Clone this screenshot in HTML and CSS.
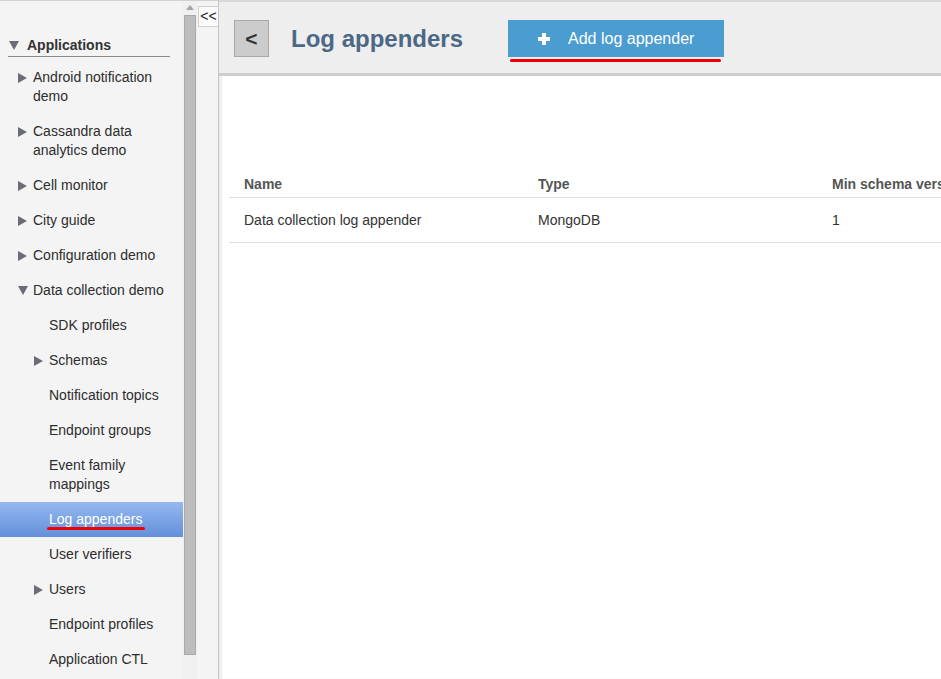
FILE: index.html
```html
<!DOCTYPE html>
<html lang="en">
<head>
<meta charset="utf-8">
<title>Log appenders</title>
<link rel="stylesheet" href="styles.css">
</head>
<body>
<div class="app">
  <aside class="sidebar">
    <div class="tree-root"><span class="tri-down root-tri"></span><span>Applications</span></div>
    <ul class="tree">
      <li class="node l1"><span class="slot"><span class="tri-right"></span></span><span class="label">Android notification demo</span></li>
      <li class="node l1"><span class="slot"><span class="tri-right"></span></span><span class="label">Cassandra data analytics demo</span></li>
      <li class="node l1"><span class="slot"><span class="tri-right"></span></span><span class="label">Cell monitor</span></li>
      <li class="node l1"><span class="slot"><span class="tri-right"></span></span><span class="label">City guide</span></li>
      <li class="node l1"><span class="slot"><span class="tri-right"></span></span><span class="label">Configuration demo</span></li>
      <li class="node l1"><span class="slot"><span class="tri-down"></span></span><span class="label">Data collection demo</span></li>
      <li class="node l2"><span class="slot"></span><span class="label">SDK profiles</span></li>
      <li class="node l2"><span class="slot"><span class="tri-right"></span></span><span class="label">Schemas</span></li>
      <li class="node l2"><span class="slot"></span><span class="label">Notification topics</span></li>
      <li class="node l2"><span class="slot"></span><span class="label">Endpoint groups</span></li>
      <li class="node l2"><span class="slot"></span><span class="label">Event family mappings</span></li>
      <li class="node l2 selected"><span class="slot"></span><span class="label"><span class="marked">Log appenders</span></span></li>
      <li class="node l2"><span class="slot"></span><span class="label">User verifiers</span></li>
      <li class="node l2"><span class="slot"><span class="tri-right"></span></span><span class="label">Users</span></li>
      <li class="node l2"><span class="slot"></span><span class="label">Endpoint profiles</span></li>
      <li class="node l2"><span class="slot"></span><span class="label">Application CTL</span></li>
    </ul>
  </aside>
  <div class="scrollbar">
    <span class="scroll-up"></span>
    <div class="thumb"></div>
  </div>
  <div class="gutter">
    <button class="collapse">&lt;&lt;</button>
  </div>
  <main class="main">
    <header class="page-header">
      <button class="back">&lt;</button>
      <h1 class="title">Log appenders</h1>
      <div class="add-wrap">
        <button class="add-btn">
          <svg class="plus" width="12" height="12" viewBox="0 0 12 12"><rect x="4" y="0" width="4" height="12" fill="#fff"/><rect x="0" y="4" width="12" height="4" fill="#fff"/></svg>
          <span>Add log appender</span>
        </button>
      </div>
    </header>
    <table class="grid">
      <thead>
        <tr><th>Name</th><th>Type</th><th>Min schema version</th></tr>
      </thead>
      <tbody>
        <tr><td>Data collection log appender</td><td>MongoDB</td><td>1</td></tr>
      </tbody>
    </table>
  </main>
</div>
</body>
</html>
```

FILE: styles.css
```css
* { box-sizing: border-box; }
html, body {
  margin: 0;
  padding: 0;
  height: 100%;
  overflow: hidden;
}
body {
  font-family: "Liberation Sans", Arial, sans-serif;
  font-size: 14px;
  color: #333;
  background: #f4f4f4;
}
.app {
  display: flex;
  height: 679px;
  border-top: 1px solid #d2d2d2;
}

/* Sidebar */
.sidebar {
  width: 183px;
  flex: none;
  background: #f4f4f4;
  overflow: hidden;
}
.tree-root {
  display: flex;
  align-items: center;
  margin: 35px 13px 3px 8px;
  padding: 0 0 1px 1px;
  border-bottom: 1px solid #8a8a8a;
  font-weight: bold;
  line-height: 19px;
  color: #333;
}
.root-tri { margin-right: 8px; }
.tree {
  list-style: none;
  margin: 0;
  padding: 0;
}
.node {
  display: flex;
  align-items: flex-start;
  padding: 8px 12px 8px 0;
  line-height: 19px;
  color: #2d2d2d;
}
.node.l1 { padding-left: 18px; }
.node.l2 { padding-left: 34px; }
.slot {
  flex: none;
  width: 15px;
  height: 19px;
  display: flex;
  align-items: center;
}
.tri-right {
  display: inline-block;
  width: 0;
  height: 0;
  border-top: 5px solid transparent;
  border-bottom: 5px solid transparent;
  border-left: 9px solid #6a6d78;
}
.tri-down {
  display: inline-block;
  width: 0;
  height: 0;
  border-left: 5px solid transparent;
  border-right: 5px solid transparent;
  border-top: 9px solid #6a6d78;
}
.node.selected {
  background: linear-gradient(#94b8f0, #6490da);
  color: #fff;
}
.marked {
  position: relative;
}
.marked::after {
  content: "";
  position: absolute;
  left: -2px;
  right: -3px;
  bottom: -3px;
  height: 3px;
  border-radius: 2px;
  background: #f00000;
}

/* Fake scrollbar */
.scrollbar {
  width: 14px;
  flex: none;
  background: #f0f0f0;
  display: flex;
  flex-direction: column;
  align-items: center;
  padding-top: 4px;
}
.scroll-up {
  width: 0;
  height: 0;
  border-left: 4px solid transparent;
  border-right: 4px solid transparent;
  border-bottom: 5px solid #a4a4a4;
}
.thumb {
  margin-top: 5px;
  width: 12px;
  height: 640px;
  background: #bdbdbd;
  border: 1px solid #a9a9a9;
}

/* Gutter */
.gutter {
  width: 21px;
  flex: none;
  background: #f4f4f4;
  padding-top: 5px;
  padding-left: 1px;
}
.collapse {
  display: block;
  width: 21px;
  height: 21px;
  padding: 0;
  border: 1px solid #cfcfcf;
  background: #fbfbfb;
  font-family: "Liberation Sans", Arial, sans-serif;
  font-size: 14px;
  line-height: 17px;
  color: #222;
  text-align: center;
}

/* Main */
.main {
  flex: 1;
  min-width: 0;
  background: #fff;
  border-left: 1px solid #c4c4c4;
  box-shadow: inset 3px 0 2px rgba(0, 0, 0, 0.07);
  overflow: hidden;
  margin-top: -1px;
}
.page-header {
  display: flex;
  align-items: center;
  height: 76px;
  padding: 2px 0 0 15px;
  background: #eeeeee;
  border-top: 2px solid #d8d8d8;
  border-bottom: 3px solid #cdcdcd;
}
.back {
  width: 35px;
  height: 37px;
  padding: 0;
  background: #cccccc;
  border: 1px solid #a8a8a8;
  font-family: "Liberation Sans", Arial, sans-serif;
  font-size: 21px;
  font-weight: bold;
  color: #333;
  line-height: 33px;
}
.title {
  margin: 0 0 0 22px;
  font-size: 24px;
  font-weight: bold;
  color: #4b6886;
  line-height: 30px;
}
.add-wrap {
  position: relative;
  margin-left: 45px;
}
.add-wrap::after {
  content: "";
  position: absolute;
  left: 2px;
  right: 3px;
  bottom: -5px;
  height: 3px;
  border-radius: 2px;
  background: #ee0000;
}
.add-btn {
  display: flex;
  align-items: center;
  width: 216px;
  height: 37px;
  padding: 0 0 0 30px;
  border: none;
  background: #4b9cd0;
  color: #fff;
  font-family: "Liberation Sans", Arial, sans-serif;
  font-size: 16px;
}
.plus { margin-right: 18px; }

/* Table */
.grid {
  margin: 92px 0 0 10px;
  width: 882px;
  border-collapse: collapse;
  table-layout: fixed;
}
.grid th, .grid td {
  width: 294px;
  text-align: left;
  white-space: nowrap;
  overflow: hidden;
  line-height: 20px;
  font-size: 14px;
}
.grid th {
  padding: 6px 15px 3px;
  font-weight: bold;
  color: #555;
  border-bottom: 1px solid #dddddd;
}
.grid td {
  padding: 12px 15px 12px;
  color: #333;
  border-bottom: 1px solid #dddddd;
}
```
